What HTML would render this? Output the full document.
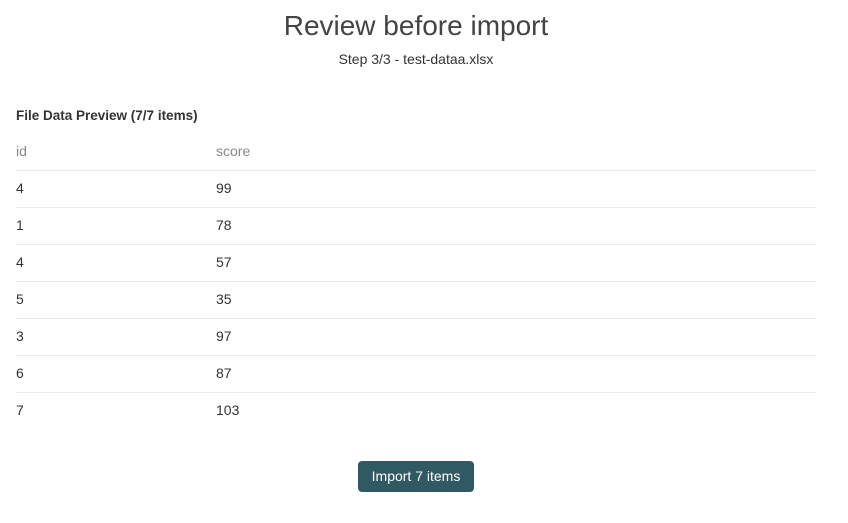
<!DOCTYPE html>
<html><head><style>
body{margin:0;width:848px;height:523px;background:#fff;font-family:"Liberation Sans",sans-serif;color:#333;position:relative;overflow:hidden}
h1{position:absolute;top:10px;left:0;width:832px;text-align:center;margin:0;font-weight:normal;font-size:28px;color:#444;letter-spacing:0}
.sub{position:absolute;top:51px;left:0;width:832px;text-align:center;font-size:14px;color:#333}
.hd{position:absolute;top:108px;left:16px;font-size:13.5px;font-weight:bold;color:#333}
.row{position:absolute;left:16px;width:800px;height:37px;border-bottom:1px solid #ebebeb;font-size:14px;line-height:37px}
.row span{position:absolute;top:0}
.row .b{left:200px}
.th{color:#888}
.btn{position:absolute;left:358px;top:461px;width:116px;height:31px;background:#2f5963;color:#fff;border-radius:4px;font-size:14px;line-height:31px;text-align:center}
</style></head><body>
<h1>Review before import</h1>
<div class="sub">Step 3/3 - test-dataa.xlsx</div>
<div class="hd">File Data Preview (7/7 items)</div>
<div class="row th" style="top:133px"><span>id</span><span class="b">score</span></div>
<div class="row" style="top:170px"><span>4</span><span class="b">99</span></div>
<div class="row" style="top:207px"><span>1</span><span class="b">78</span></div>
<div class="row" style="top:244px"><span>4</span><span class="b">57</span></div>
<div class="row" style="top:281px"><span>5</span><span class="b">35</span></div>
<div class="row" style="top:318px"><span>3</span><span class="b">97</span></div>
<div class="row" style="top:355px"><span>6</span><span class="b">87</span></div>
<div class="row" style="top:392px;border-bottom:none"><span>7</span><span class="b">103</span></div>
<div class="btn">Import 7 items</div>
</body></html>
